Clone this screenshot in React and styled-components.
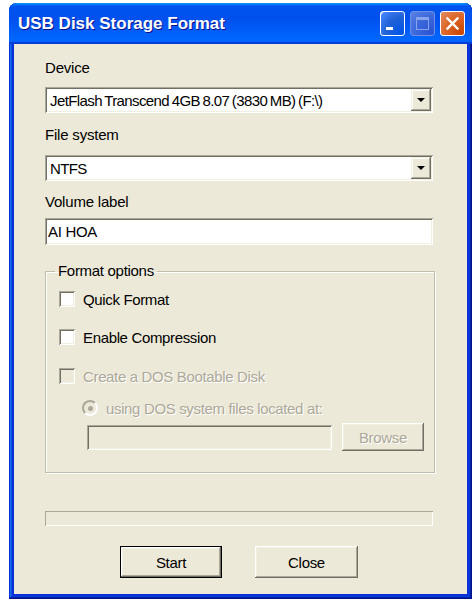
import React from "react";
import styled, { createGlobalStyle } from "styled-components";

const GlobalStyle = createGlobalStyle`
  body {
    margin: 0;
    background: #fff;
    font-family: "Liberation Sans", Arial, sans-serif;
  }
`;

const Window = styled.div`
  width: 463px;
  margin: 3px 0 0 9px;
  box-sizing: border-box;
  background: #0831d9;
  border-radius: 8px 8px 0 0;
  padding: 0 5px 5px;
  box-shadow: inset -1px -1px #00138c, inset 1px 1px #0831d9,
    inset -2px -2px #001ea0, inset 2px 2px #166aee, inset -3px -3px #003bda,
    inset 3px 3px #0855dd;
`;

const TitleBar = styled.div`
  margin: 0 -5px;
  height: 41px;
  border-radius: 8px 8px 0 0;
  display: flex;
  align-items: center;
  justify-content: space-between;
  padding: 0 7px 0 9px;
  background: linear-gradient(
    180deg,
    #0997ff,
    #0053ee 8%,
    #0050ee 40%,
    #06f 88%,
    #06f 93%,
    #005bff 95%,
    #003dd7 96%,
    #003dd7
  );
`;

const Title = styled.span`
  color: #fff;
  font-weight: bold;
  font-size: 17px;
  text-shadow: 1px 1px #0f1089;
`;

const Controls = styled.div`
  display: flex;
  gap: 5px;
`;

const CtrlButton = styled.div`
  width: 25px;
  height: 25px;
  box-sizing: border-box;
  border-radius: 3px;
  display: flex;
  align-items: center;
  justify-content: center;
  border: 1px solid ${(p) => (p.$dim ? "#6b8fe6" : "#fff")};
  background: ${(p) =>
    p.$close
      ? "radial-gradient(circle at 90% 90%, #cc4600 0%, #dc6527 55%, #e18e64 100%)"
      : p.$dim
      ? "radial-gradient(circle at 90% 90%, #2a54d4 0%, #3c68dc 55%, #5b82e6 100%)"
      : "radial-gradient(circle at 90% 90%, #0054e9 0%, #2263d5 55%, #4282ff 90%, #fff 100%)"};
`;

const FieldLabel = styled.div`
  font-size: 15px;
  line-height: 16px;
  letter-spacing: -0.2px;
  color: #000;
  margin-top: ${(p) => p.$top || 0}px;
  margin-bottom: ${(p) => p.$bottom || 11}px;
`;

const Sunken = styled.div`
  box-sizing: border-box;
  display: flex;
  align-items: center;
  background: ${(p) => (p.$disabled ? "#ece9d8" : "#fff")};
  box-shadow: inset 1px 1px #aca899, inset -1px -1px #fff,
    inset 2px 2px #716f64, inset -2px -2px #f1efe2;
`;

const Combo = styled(Sunken)`
  height: 26px;
  padding: 2px 2px 2px 5px;
  justify-content: space-between;
  font-size: 15px;
  letter-spacing: -0.6px;
  word-spacing: -1px;
`;

const TextBox = styled(Sunken)`
  height: 27px;
  padding: 0 5px 0 3px;
  font-size: 15px;
  letter-spacing: -0.3px;
`;

const DropButton = styled.div`
  width: 20px;
  height: 22px;
  box-sizing: border-box;
  background: #ece9d8;
  display: flex;
  align-items: center;
  justify-content: center;
  box-shadow: inset -1px -1px #716f64, inset 1px 1px #f1efe2,
    inset -2px -2px #aca899, inset 2px 2px #fff;
`;

const Arrow = styled.span`
  width: 0;
  height: 0;
  border-left: 4px solid transparent;
  border-right: 4px solid transparent;
  border-top: 4px solid #000;
`;

const Group = styled.fieldset`
  margin: 18px 0 0;
  padding: 11px 10px 21px 13px;
  border: 1px solid #c0bdae;
  box-shadow: 1px 1px #fff, inset 1px 1px #fff;
  display: flex;
  flex-direction: column;
`;

const Legend = styled.legend`
  font-size: 15px;
  line-height: 16px;
  letter-spacing: -0.3px;
  padding: 0 3px;
  margin-left: -4px;
`;

const OptionRow = styled.label`
  display: flex;
  align-items: center;
  height: 18px;
  gap: 8px;
  font-size: 15px;
  letter-spacing: -0.35px;
  margin-top: ${(p) => p.$top || 0}px;
  margin-left: ${(p) => p.$indent || 0}px;
  color: ${(p) => (p.$disabled ? "#aca899" : "#000")};
  text-shadow: ${(p) => (p.$disabled ? "1px 1px #fff" : "none")};
`;

const CheckBox = styled.span`
  width: 16px;
  height: 16px;
  box-sizing: border-box;
  background: ${(p) => (p.$disabled ? "#ece9d8" : "#fff")};
  box-shadow: inset 1px 1px #aca899, inset -1px -1px #fff,
    inset 2px 2px #716f64, inset -2px -2px #f1efe2;
`;

const Radio = styled.span`
  width: 16px;
  height: 16px;
  border-radius: 50%;
  box-sizing: border-box;
  display: flex;
  align-items: center;
  justify-content: center;
  background: #ece9d8;
  border: 2px solid;
  border-color: #aca899 #fff #fff #aca899;
  &::after {
    content: "";
    width: 5px;
    height: 5px;
    border-radius: 50%;
    background: #aca899;
  }
`;

const PathRow = styled.div`
  display: flex;
  align-items: center;
  gap: 10px;
  margin: 6px 0 0 28px;
`;

const PathBox = styled(Sunken)`
  width: 245px;
  height: 25px;
`;

const PushButton = styled.div`
  box-sizing: border-box;
  width: ${(p) => p.$width}px;
  height: ${(p) => p.$height}px;
  display: flex;
  align-items: center;
  justify-content: center;
  font-size: 15px;
  letter-spacing: -0.3px;
  background: #ece9d8;
  color: ${(p) => (p.$disabled ? "#aca899" : "#000")};
  text-shadow: ${(p) => (p.$disabled ? "1px 1px #fff" : "none")};
  border: ${(p) => (p.$default ? "1px solid #000" : "none")};
  box-shadow: inset -1px -1px #716f64, inset 1px 1px #fff,
    inset -2px -2px #aca899, inset 2px 2px #f1efe2;
`;

const Progress = styled(Sunken)`
  height: 15px;
  margin-top: 38px;
  background: #ece9d8;
  box-shadow: inset 1px 1px #aca899, inset -1px -1px #fff;
`;

const ButtonRow = styled.div`
  display: flex;
  justify-content: center;
  gap: 33px;
  margin-top: 20px;
`;

const Body = styled.div`
  background: #ece9d8;
  padding: 16px 34px 16px 31px;
  display: flex;
  flex-direction: column;
`;

function MinIcon() {
  return (
    <svg width="23" height="23" viewBox="0 0 23 23">
      <rect x="5" y="15" width="7" height="3" fill="#fff" />
    </svg>
  );
}

function MaxIcon() {
  return (
    <svg width="23" height="23" viewBox="0 0 23 23">
      <rect x="5.5" y="5.5" width="12" height="12" fill="none" stroke="#86a3ec" strokeWidth="1" />
      <rect x="5" y="5" width="13" height="3" fill="#86a3ec" />
    </svg>
  );
}

function CloseIcon() {
  return (
    <svg width="23" height="23" viewBox="0 0 23 23">
      <path d="M6.5 6.5 L16.5 16.5 M16.5 6.5 L6.5 16.5" stroke="#fff" strokeWidth="2.4" strokeLinecap="square" />
    </svg>
  );
}

export default function App() {
  return (
    <>
      <GlobalStyle />
      <Window>
        <TitleBar>
          <Title>USB Disk Storage Format</Title>
          <Controls>
            <CtrlButton><MinIcon /></CtrlButton>
            <CtrlButton $dim><MaxIcon /></CtrlButton>
            <CtrlButton $close><CloseIcon /></CtrlButton>
          </Controls>
        </TitleBar>
        <Body>
          <FieldLabel>Device</FieldLabel>
          <Combo>
            <span>JetFlash Transcend 4GB 8.07 (3830 MB) (F:\)</span>
            <DropButton><Arrow /></DropButton>
          </Combo>
          <FieldLabel $top={14} $bottom={12}>File system</FieldLabel>
          <Combo>
            <span>NTFS</span>
            <DropButton><Arrow /></DropButton>
          </Combo>
          <FieldLabel $top={13} $bottom={8}>Volume label</FieldLabel>
          <TextBox>AI HOA</TextBox>
          <Group>
            <Legend>Format options</Legend>
            <OptionRow>
              <CheckBox />
              Quick Format
            </OptionRow>
            <OptionRow $top={20}>
              <CheckBox />
              Enable Compression
            </OptionRow>
            <OptionRow $top={21} $disabled>
              <CheckBox $disabled />
              Create a DOS Bootable Disk
            </OptionRow>
            <OptionRow $top={14} $indent={23} $disabled>
              <Radio />
              using DOS system files located at:
            </OptionRow>
            <PathRow>
              <PathBox $disabled />
              <PushButton $width={82} $height={28} $disabled>Browse</PushButton>
            </PathRow>
          </Group>
          <Progress />
          <ButtonRow>
            <PushButton $width={102} $height={32} $default>Start</PushButton>
            <PushButton $width={103} $height={32}>Close</PushButton>
          </ButtonRow>
        </Body>
      </Window>
    </>
  );
}
